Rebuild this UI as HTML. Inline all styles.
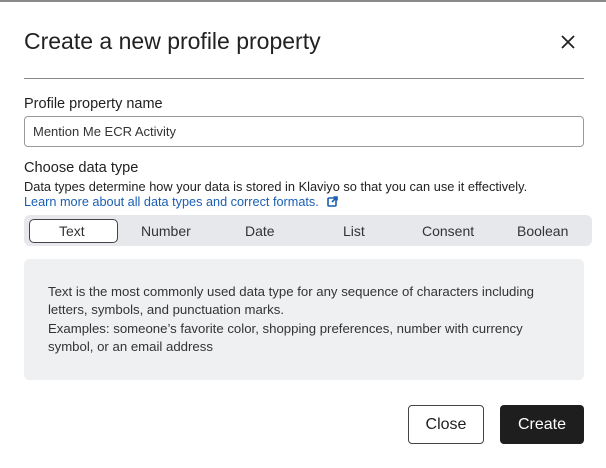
<!DOCTYPE html>
<html><head><style>
*{margin:0;padding:0;box-sizing:border-box}
body{width:606px;height:468px;background:#fff;font-family:"Liberation Sans",sans-serif;color:#1f1f1f;position:relative;overflow:hidden}
.a{position:absolute;white-space:nowrap}
</style></head><body>
<div class="a" style="left:0;top:0;width:606px;height:2px;background:#8a8a8a"></div>
<div class="a" style="left:24px;top:28px;font-size:23px;color:#222">Create a new profile property</div>
<svg class="a" style="left:560px;top:34px" width="16" height="16" viewBox="0 0 16 16"><path d="M2 2L14 14M14 2L2 14" stroke="#222" stroke-width="1.8"/></svg>
<div class="a" style="left:24px;top:78px;width:560px;height:1px;background:#888"></div>
<div class="a" style="left:24px;top:96px;font-size:14.5px">Profile property name</div>
<div class="a" style="left:24px;top:116px;width:560px;height:31px;border:1px solid #999;border-radius:4px"></div>
<div class="a" style="left:33px;top:124px;font-size:13px;color:#333">Mention Me ECR Activity</div>
<div class="a" style="left:24px;top:160px;font-size:14.6px">Choose data type</div>
<div class="a" style="left:24px;top:179px;font-size:12.8px;color:#222">Data types determine how your data is stored in Klaviyo so that you can use it effectively.</div>
<div class="a" style="left:24px;top:195px;font-size:12.7px;color:#1a5fb4">Learn more about all data types and correct formats.</div>
<svg class="a" style="left:327px;top:196px" width="11" height="11" viewBox="0 0 11 11"><rect x="1" y="2" width="8" height="8" rx="1" fill="none" stroke="#1a5fb4" stroke-width="1.6"/><path d="M5 6L10 1M6.5 1H10V4.5" stroke="#1a5fb4" stroke-width="1.6" fill="none"/></svg>
<div class="a" style="left:24px;top:215px;width:568px;height:31px;background:#e6e8eb;border-radius:6px"></div>
<div class="a" style="left:29px;top:219px;width:89px;height:24px;background:#fff;border:1px solid #444;border-radius:5px"></div>
<div class="a" style="top:223px;left:0;width:606px;font-size:14px;color:#333">
<span class="a" style="left:59px">Text</span><span class="a" style="left:141px">Number</span><span class="a" style="left:245px">Date</span><span class="a" style="left:343px">List</span><span class="a" style="left:422px">Consent</span><span class="a" style="left:517px">Boolean</span></div>
<div class="a" style="left:24px;top:259px;width:560px;height:121px;background:#eff0f2;border-radius:5px"></div>
<div class="a" style="left:48px;top:283px;font-size:13.2px;line-height:18.3px;color:#333">Text is the most commonly used data type for any sequence of characters including<br>letters, symbols, and punctuation marks.<br>Examples: someone’s favorite color, shopping preferences, number with currency<br>symbol, or an email address</div>
<div class="a" style="left:408px;top:405px;width:76px;height:39px;border:1px solid #444;border-radius:4px;font-size:16px;text-align:center;line-height:37px">Close</div>
<div class="a" style="left:500px;top:405px;width:84px;height:39px;background:#1e1e1e;border-radius:4px;font-size:16px;text-align:center;line-height:39px;color:#fff">Create</div>
</body></html>
